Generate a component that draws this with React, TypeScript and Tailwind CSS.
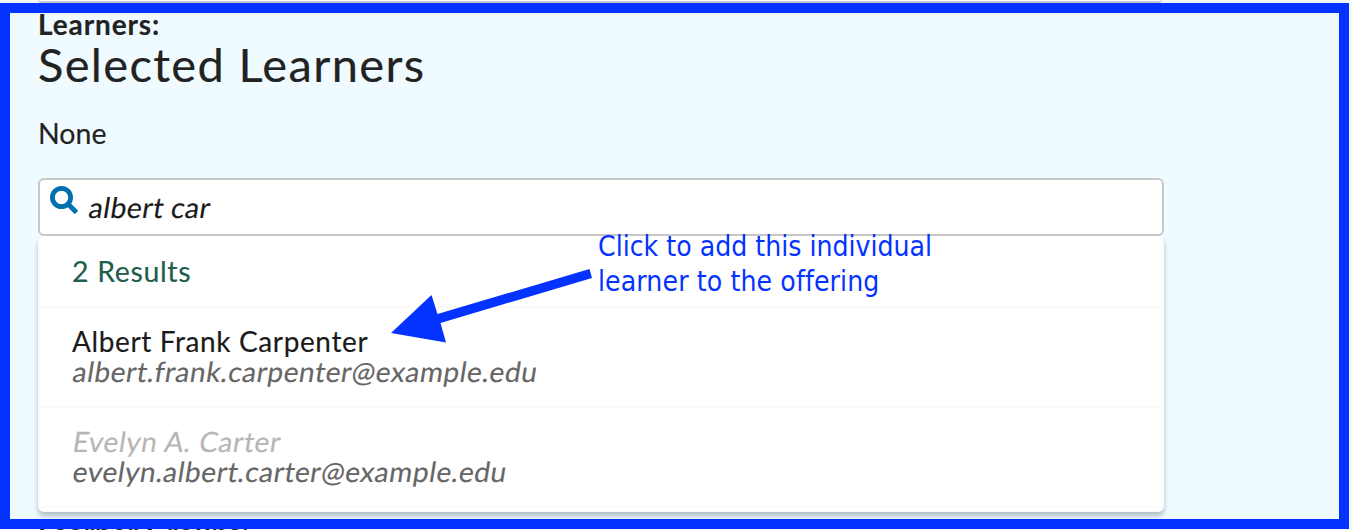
import React from "react";

type Learner = { name: string; email: string; enrolled?: boolean };

const learners: Learner[] = [
  { name: "Albert Frank Carpenter", email: "albert.frank.carpenter@example.edu" },
  { name: "Evelyn A. Carter", email: "evelyn.albert.carter@example.edu", enrolled: true },
];

function SearchIcon() {
  return (
    <svg viewBox="0 0 28 28" className="mt-[6px] ml-[10px] h-7 w-7 shrink-0" fill="none" stroke="#0070b0">
      <circle cx="11.5" cy="11.5" r="9.1" strokeWidth="4.8" />
      <path d="M18 18 26.500 26.500" strokeWidth="4.800" />
    </svg>
  );
}

function LearnerRow({ name, email, enrolled }: Learner) {
  return (
    <li className="flex h-[100px] flex-col items-start border-b-2 border-[#fafafa] pt-[18px] pl-[32px] text-[28px] leading-[30px] whitespace-nowrap">
      <span
        className={
          enrolled
            ? "block h-[30px] origin-[0_75%] -skew-x-[9deg] tracking-[0.65px] text-[#b9b5b5]"
            : "block h-[30px] tracking-[0.62px] text-[#1a1a1a]"
        }
      >
        {name}
      </span>
      <span className="block h-[30px] origin-[0_75%] -skew-x-[9deg] tracking-[0.58px] text-[#666]">{email}</span>
    </li>
  );
}

export default function App() {
  return (
    <div className="relative h-[530px] w-[1352px] overflow-hidden bg-[#f3fafe] font-['Lato',sans-serif] text-[#222] [-webkit-text-stroke:0.15px_currentColor]">
      <div className="ml-[38px] h-[3px] w-[1124px] rounded-b-md border-b-2 border-[#c8c8c8] bg-white" />
      <main className="h-[526px] w-[1349px] border-[10px] border-[#0433ff] bg-[#effbff] pl-[28px]">
        <p className="-mt-[5px] h-[32px] text-[28px] leading-[32px] font-bold">
          <span className="tracking-[0.9px]">Learners:</span>
        </p>
        <h1 className="-mt-[2px] h-[54px] text-[47px] leading-[52px]">
          <span className="tracking-[1.35px]">Selected Learners</span>
        </h1>
        <p className="mt-[24px] h-[35px] text-[28.5px] leading-[34px]">
          <span>None</span>
        </p>
        <div className="mt-[27px] flex h-[58px] w-[1126px] rounded-[6px] border-2 border-[#c8c8c8] bg-white">
          <SearchIcon />
          <span className="mt-[10px] ml-[10px] h-[34px] origin-[0_75%] -skew-x-[9deg] text-[28.5px] leading-[34px] tracking-[0.35px] text-[#1a1a1a]">
            albert car
          </span>
        </div>
        <section className="h-[276px] w-[1126px] rounded-[6px] border-2 border-t-0 border-[#fcfcfc] bg-white shadow-[0_4px_5px_rgba(0,40,40,0.28)]">
          <h2 className="h-[72px] border-b-2 border-[#fafafa] pt-[18px] pl-[32px] text-[28.5px] leading-[34px] text-[#215d4e]">
            <span className="tracking-[0.65px]">2 Results</span>
          </h2>
          <ul>
            {learners.map((learner) => (
              <LearnerRow key={learner.email} {...learner} />
            ))}
          </ul>
        </section>
      </main>
      <div className="ml-[38px] h-px overflow-hidden text-[28px] leading-[32px] font-bold">
        <p className="-mt-[12px] tracking-[0.9px]">Learner Groups:</p>
      </div>
      <div className="absolute top-[229px] left-[598px] font-['DejaVu_Sans_Condensed','DejaVu_Sans',sans-serif] text-[28.1px] leading-[35px] font-normal whitespace-nowrap text-[#0433ff] [-webkit-text-stroke:0]">
        <div><span>Click to add this individual</span></div>
        <div><span className="tracking-[0.1px]">learner to the offering</span></div>
      </div>
      <svg className="absolute top-[260px] left-[380px] h-[100px] w-[230px]" viewBox="380 260 230 100" fill="#0433ff">
        <path d="M391 333 431.500 295 437.500 314 589.500 269 592 278 440.500 323 446 342.500Z" />
      </svg>
    </div>
  );
}
